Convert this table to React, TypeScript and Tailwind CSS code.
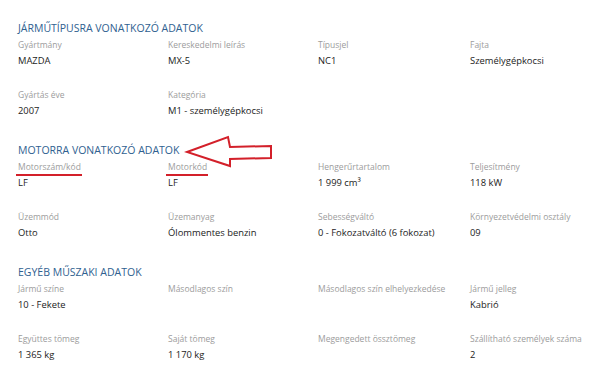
import React from "react";

type Field = { label: string; value?: string; mark?: boolean };

type Section = { title: string; rows: Field[][] };

const sections: Section[] = [
  {
    title: "Járműtípusra vonatkozó adatok",
    rows: [
      [
        { label: "Gyártmány", value: "MAZDA" },
        { label: "Kereskedelmi leírás", value: "MX-5" },
        { label: "Típusjel", value: "NC1" },
        { label: "Fajta", value: "Személygépkocsi" },
      ],
      [
        { label: "Gyártás éve", value: "2007" },
        { label: "Kategória", value: "M1 - személygépkocsi" },
      ],
    ],
  },
  {
    title: "Motorra vonatkozó adatok",
    rows: [
      [
        { label: "Motorszám/kód", value: "LF", mark: true },
        { label: "Motorkód", value: "LF", mark: true },
        { label: "Hengerűrtartalom", value: "1 999 cm³" },
        { label: "Teljesítmény", value: "118 kW" },
      ],
      [
        { label: "Üzemmód", value: "Otto" },
        { label: "Üzemanyag", value: "Ólommentes benzin" },
        { label: "Sebességváltó", value: "0 - Fokozatváltó (6 fokozat)" },
        { label: "Környezetvédelmi osztály", value: "09" },
      ],
    ],
  },
  {
    title: "Egyéb műszaki adatok",
    rows: [
      [
        { label: "Jármű színe", value: "10 - Fekete" },
        { label: "Másodlagos szín" },
        { label: "Másodlagos szín elhelyezkedése" },
        { label: "Jármű jelleg", value: "Kabrió" },
      ],
      [
        { label: "Együttes tömeg", value: "1 365 kg" },
        { label: "Saját tömeg", value: "1 170 kg" },
        { label: "Megengedett össztömeg" },
        { label: "Szállítható személyek száma", value: "2" },
      ],
    ],
  },
];

function Cell({ f }: { f: Field }) {
  return (
    <div className="flex flex-col">
      <div className="flex">
        <span className="relative text-[8.5px] leading-[14px] text-[#9c9c9c]">
          {f.label}
          {f.mark && (
            <span className="absolute left-[-2px] right-[-1px] bottom-[-2px] h-[2px] bg-[#d3202a]" />
          )}
        </span>
      </div>
      <div className="mt-[1px] h-[16px] text-[9.4px] leading-[16px] text-[#1c1c1c]">
        {f.value ?? ""}
      </div>
    </div>
  );
}

export default function App() {
  return (
    <div
      className="relative w-[600px] h-[373px] overflow-hidden bg-white pl-[18px] pt-[20px]"
      style={{ fontFamily: '"Open Sans", "Liberation Sans", sans-serif' }}
    >
      <div className="flex flex-col gap-[23px]">
        {sections.map((s) => (
          <section key={s.title} className="flex flex-col">
            <h2 className="h-[16px] text-[10.5px] leading-[16px] uppercase text-[#2f6190] mb-[2px]">
              {s.title}
            </h2>
            <div className="flex flex-col gap-[19px]">
              {s.rows.map((row, i) => (
                <div
                  key={i}
                  className="grid grid-cols-[150px_150px_152px_1fr]"
                >
                  {row.map((f) => (
                    <Cell key={f.label} f={f} />
                  ))}
                </div>
              ))}
            </div>
          </section>
        ))}
      </div>

      {/* red callout arrow pointing at the engine section title */}
      <svg
        className="absolute left-[184px] top-[134px]"
        width="92"
        height="36"
        viewBox="0 0 92 36"
        fill="none"
      >
        <path
          d="M3 18 L44 3 L46 13 L87 12 L87 24 L46 25 L46 32 Z"
          stroke="#d3202a"
          strokeWidth="2"
          strokeLinejoin="miter"
        />
      </svg>
    </div>
  );
}
